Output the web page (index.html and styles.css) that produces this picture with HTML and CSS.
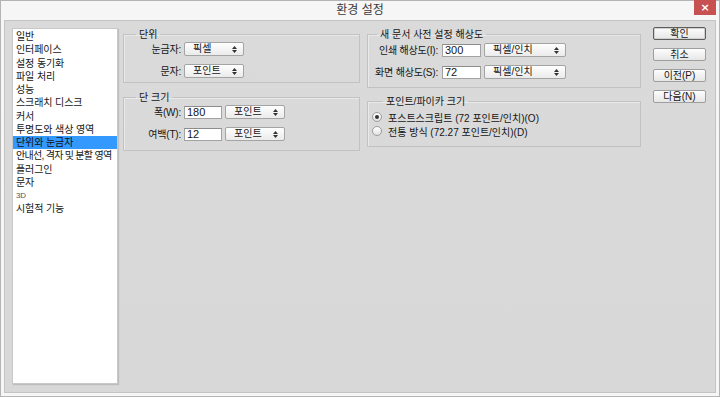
FILE: index.html
```html
<!DOCTYPE html>
<html lang="ko">
<head>
<meta charset="utf-8">
<title>환경 설정</title>
<link rel="stylesheet" href="styles.css">
</head>
<body>
<div class="window">
  <div class="titlebar">
    <span></span>
    <span class="title">환경 설정</span>
    <span class="close">×</span>
  </div>
  <div class="client">
    <ul class="list">
      <li>일반</li>
      <li>인터페이스</li>
      <li>설정 동기화</li>
      <li>파일 처리</li>
      <li>성능</li>
      <li>스크래치 디스크</li>
      <li>커서</li>
      <li>투명도와 색상 영역</li>
      <li class="selected">단위와 눈금자</li>
      <li class="tight">안내선, 격자 및 분할 영역</li>
      <li>플러그인</li>
      <li>문자</li>
      <li class="small">3D</li>
      <li>시험적 기능</li>
    </ul>

    <div class="col col-left">
      <fieldset class="group g-units">
        <legend>단위</legend>
        <div class="row">
          <label class="lbl lbl-left">눈금자:</label>
          <div class="select w60"><span>픽셀</span><svg class="arr" width="5" height="7" viewBox="0 0 5 7"><path d="M0 3 L2.5 0 L5 3Z M0 4 L2.5 7 L5 4Z" fill="#333"/></svg></div>
        </div>
        <div class="row">
          <label class="lbl lbl-left">문자:</label>
          <div class="select w60"><span>포인트</span><svg class="arr" width="5" height="7" viewBox="0 0 5 7"><path d="M0 3 L2.5 0 L5 3Z M0 4 L2.5 7 L5 4Z" fill="#333"/></svg></div>
        </div>
      </fieldset>

      <fieldset class="group g-cols">
        <legend>단 크기</legend>
        <div class="row">
          <label class="lbl lbl-left">폭(W):</label>
          <input class="field w38" type="text" value="180">
          <div class="select w60"><span>포인트</span><svg class="arr" width="5" height="7" viewBox="0 0 5 7"><path d="M0 3 L2.5 0 L5 3Z M0 4 L2.5 7 L5 4Z" fill="#333"/></svg></div>
        </div>
        <div class="row">
          <label class="lbl lbl-left">여백(T):</label>
          <input class="field w38" type="text" value="12">
          <div class="select w60"><span>포인트</span><svg class="arr" width="5" height="7" viewBox="0 0 5 7"><path d="M0 3 L2.5 0 L5 3Z M0 4 L2.5 7 L5 4Z" fill="#333"/></svg></div>
        </div>
      </fieldset>
    </div>

    <div class="col col-right">
      <fieldset class="group g-res">
        <legend>새 문서 사전 설정 해상도</legend>
        <div class="row">
          <label class="lbl lbl-right">인쇄 해상도(I):</label>
          <input class="field w39" type="text" value="300">
          <div class="select w82"><span>픽셀/인치</span><svg class="arr" width="5" height="7" viewBox="0 0 5 7"><path d="M0 3 L2.5 0 L5 3Z M0 4 L2.5 7 L5 4Z" fill="#333"/></svg></div>
        </div>
        <div class="row">
          <label class="lbl lbl-right">화면 해상도(S):</label>
          <input class="field w39" type="text" value="72">
          <div class="select w82"><span>픽셀/인치</span><svg class="arr" width="5" height="7" viewBox="0 0 5 7"><path d="M0 3 L2.5 0 L5 3Z M0 4 L2.5 7 L5 4Z" fill="#333"/></svg></div>
        </div>
      </fieldset>

      <fieldset class="group g-pica">
        <legend>포인트/파이카 크기</legend>
        <div class="radio-row"><span class="radio checked"></span><span>포스트스크립트 (72 포인트/인치)(O)</span></div>
        <div class="radio-row"><span class="radio"></span><span>전통 방식 (72.27 포인트/인치)(D)</span></div>
      </fieldset>
    </div>

    <div class="buttons">
      <div class="btn default">확인</div>
      <div class="btn">취소</div>
      <div class="btn">이전(P)</div>
      <div class="btn">다음(N)</div>
    </div>
  </div>
</div>
</body>
</html>
```

FILE: styles.css
```css
* { box-sizing: border-box; }
html, body { margin: 0; padding: 0; }
body {
  width: 720px;
  height: 397px;
  overflow: hidden;
  font-family: "Liberation Sans", "Noto Sans CJK KR", sans-serif;
  font-size: 10px;
  color: #161616;
  background: #ffffff;
}
.window {
  width: 720px;
  height: 397px;
  border: 1px solid #b4b4b4;
  background: #f6f6f6;
  display: flex;
  flex-direction: column;
}
.titlebar {
  height: 19px;
  display: grid;
  grid-template-columns: 1fr auto 1fr;
  align-items: start;
}
.title {
  font-size: 12px;
  line-height: 18px;
  color: #3a3a3a;
}
.close {
  justify-self: end;
  width: 22px;
  height: 15px;
  margin-right: 3px;
  margin-top: -1px;
  background: #c75050;
  color: #fff;
  font-size: 11px;
  font-weight: bold;
  line-height: 15px;
  text-align: center;
  font-family: "DejaVu Sans", sans-serif;
}
.client {
  flex: 1;
  margin: 0 3px 3px 3px;
  border: 1px solid #c4c4c4;
  background: linear-gradient(180deg, #dadada, #d8d8d8);
  display: flex;
  align-items: flex-start;
  padding: 0 9px 8px 7px;
}
.list {
  list-style: none;
  margin: 7px 0 0 0;
  padding: 1px 0 0 0;
  width: 106px;
  align-self: stretch;
  background: #fff;
  border: 1px solid #c8c8c8;
  box-shadow: 1px 1px 1px rgba(0,0,0,0.12);
}
.list li {
  height: 13.25px;
  line-height: 13.25px;
  padding-left: 3px;
  white-space: nowrap;
  overflow: hidden;
  letter-spacing: -0.1px;
}
.list li.tight {
  letter-spacing: -0.7px;
}
.list li.selected {
  background: #3399ff;
  color: #111;
}
.list li.small {
  font-size: 8px;
  color: #555;
}
.col {
  display: flex;
  flex-direction: column;
  padding-top: 7px;
}
.col-left { width: 237px; margin-left: 5px; gap: 8px; }
.col-right { width: 274px; margin-left: 7px; gap: 7px; }
.group {
  margin: 0;
  min-inline-size: 0;
  border: 1px solid #c2c2c2;
  box-shadow: inset 1px 1px 0 #e9e9e9;
  padding: 0;
}
.group legend {
  line-height: 13px;
  height: 13px;
  padding: 0 3px;
  margin-left: 12px;
}
.g-res legend { margin-left: 9px; }
.g-pica legend { margin-left: 11px; }
.g-units { padding: 1px 0 4px 0; display: flex; flex-direction: column; gap: 8px; }
.g-cols { padding: 1px 0 9px 0; display: flex; flex-direction: column; gap: 8px; }
.g-res { padding: 2px 0 8px 0; display: flex; flex-direction: column; gap: 8px; }
.g-pica { padding: 2px 0 8px 4px; }
.row {
  display: flex;
  align-items: center;
}
.lbl {
  text-align: right;
  white-space: nowrap;
  line-height: 13px;
  letter-spacing: -0.2px;
}
.lbl-left { width: 57px; margin-right: 3px; }
.lbl-right { width: 70px; margin-right: 4px; }
.select {
  height: 14px;
  border: 1px solid #a4a4a4;
  border-radius: 2px;
  background: linear-gradient(180deg, #fefefe, #ebebeb);
  display: flex;
  align-items: center;
  justify-content: space-between;
  padding: 0 6px 0 8px;
  line-height: 12px;
  white-space: nowrap;
}
.w60 { width: 60px; }
.w82 { width: 82px; }
.arr { display: block; }
.field {
  height: 13px;
  border: 1px solid #a2a2a2;
  border-top-color: #8c8c8c;
  background: #fff;
  font: inherit;
  font-size: 11px;
  color: #161616;
  padding: 0 2px;
  margin: 0 3px 0 0;
  line-height: 11px;
  outline: none;
}
.w38 { width: 38px; }
.w39 { width: 39px; }
.radio-row {
  display: flex;
  align-items: center;
  height: 14px;
  gap: 6px;
  white-space: nowrap;
}
.radio {
  width: 10px;
  height: 10px;
  border-radius: 50%;
  border: 1px solid #9c9c9c;
  background: linear-gradient(180deg, #ffffff, #e2e2e2);
  display: flex;
  align-items: center;
  justify-content: center;
}
.radio.checked::after {
  content: "";
  width: 4px;
  height: 4px;
  border-radius: 50%;
  background: #333;
}
.buttons {
  width: 53px;
  margin-left: 12px;
  padding-top: 6px;
  display: flex;
  flex-direction: column;
  gap: 8px;
}
.btn {
  height: 13px;
  border: 1px solid #9e9e9e;
  border-radius: 2px;
  background: linear-gradient(180deg, #fdfdfd, #e6e6e6);
  text-align: center;
  line-height: 11px;
  font-size: 10px;
}
.btn.default {
  border-color: #5e5e5e;
  box-shadow: inset 0 0 0 1px #d0d0d0;
}
```
